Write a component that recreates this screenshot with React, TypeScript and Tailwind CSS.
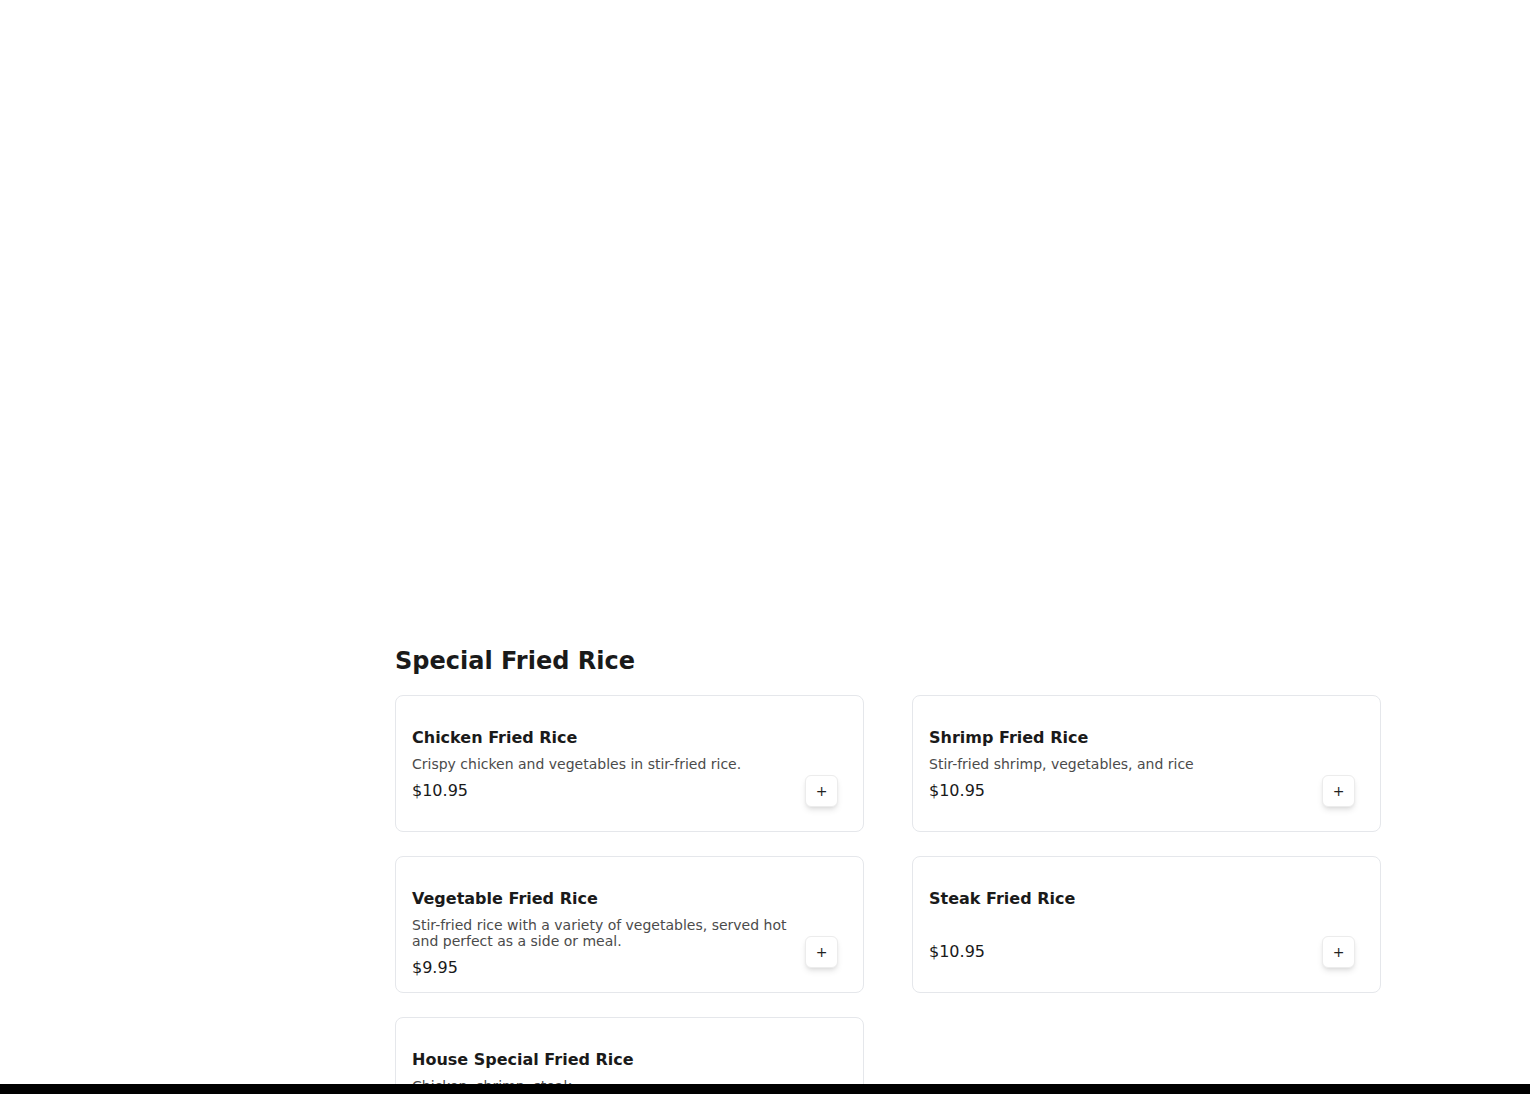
import React from "react";

interface MenuItem {
  name: string;
  description?: string;
  price?: string;
}

const ITEMS: MenuItem[] = [
  {
    name: "Chicken Fried Rice",
    description: "Crispy chicken and vegetables in stir-fried rice.",
    price: "$10.95",
  },
  {
    name: "Shrimp Fried Rice",
    description: "Stir-fried shrimp, vegetables, and rice",
    price: "$10.95",
  },
  {
    name: "Vegetable Fried Rice",
    description:
      "Stir-fried rice with a variety of vegetables, served hot and perfect as a side or meal.",
    price: "$9.95",
  },
  { name: "Steak Fried Rice", price: "$10.95" },
  {
    name: "House Special Fried Rice",
    description: "Chicken, shrimp, steak",
    price: "$11.95",
  },
];

const ItemCard = ({ item }: { item: MenuItem }) => (
  <div className="h-[137px] rounded-lg border border-[#e5e7eb] bg-white pl-4 pr-[25px] pt-[30px]">
    <div className="flex items-start justify-between gap-4">
      <div className="min-w-0 flex-1">
        <h3 className="text-base font-bold leading-6 text-[#1a1a1a]">
          {item.name}
        </h3>
        <p className="mt-[5.5px] min-h-[17px] max-w-[380px] text-sm leading-[16.5px] text-[#4b4b4b]">
          {item.description}
        </p>
        <div className="mt-1.5 text-base leading-6 text-[#1a1a1a]">
          {item.price}
        </div>
      </div>
      {/* button keeps its own spot, whatever the text height */}
      <button className="mt-[49px] flex h-8 w-[33px] shrink-0 items-center justify-center rounded-md border border-[#ececec] bg-white text-sm text-[#222] shadow-md">
        +
      </button>
    </div>
  </div>
);

export default function App() {
  return (
    <div
      className="min-h-screen bg-white"
      style={{ fontFamily: '"DejaVu Sans", sans-serif' }}
    >
      <div className="flex">
        <div className="w-[395px] shrink-0" />
        <main className="w-[986px] pt-[645px]">
          <h2 className="text-2xl font-bold leading-8 text-[#1a1a1a]">
            Special Fried Rice
          </h2>
          <div className="mt-[18px] grid grid-cols-2 gap-x-12 gap-y-6">
            {ITEMS.map((item) => (
              <ItemCard key={item.name} item={item} />
            ))}
          </div>
        </main>
      </div>
      <div className="fixed bottom-0 left-0 right-0 h-[10px] bg-black" />
    </div>
  );
}
